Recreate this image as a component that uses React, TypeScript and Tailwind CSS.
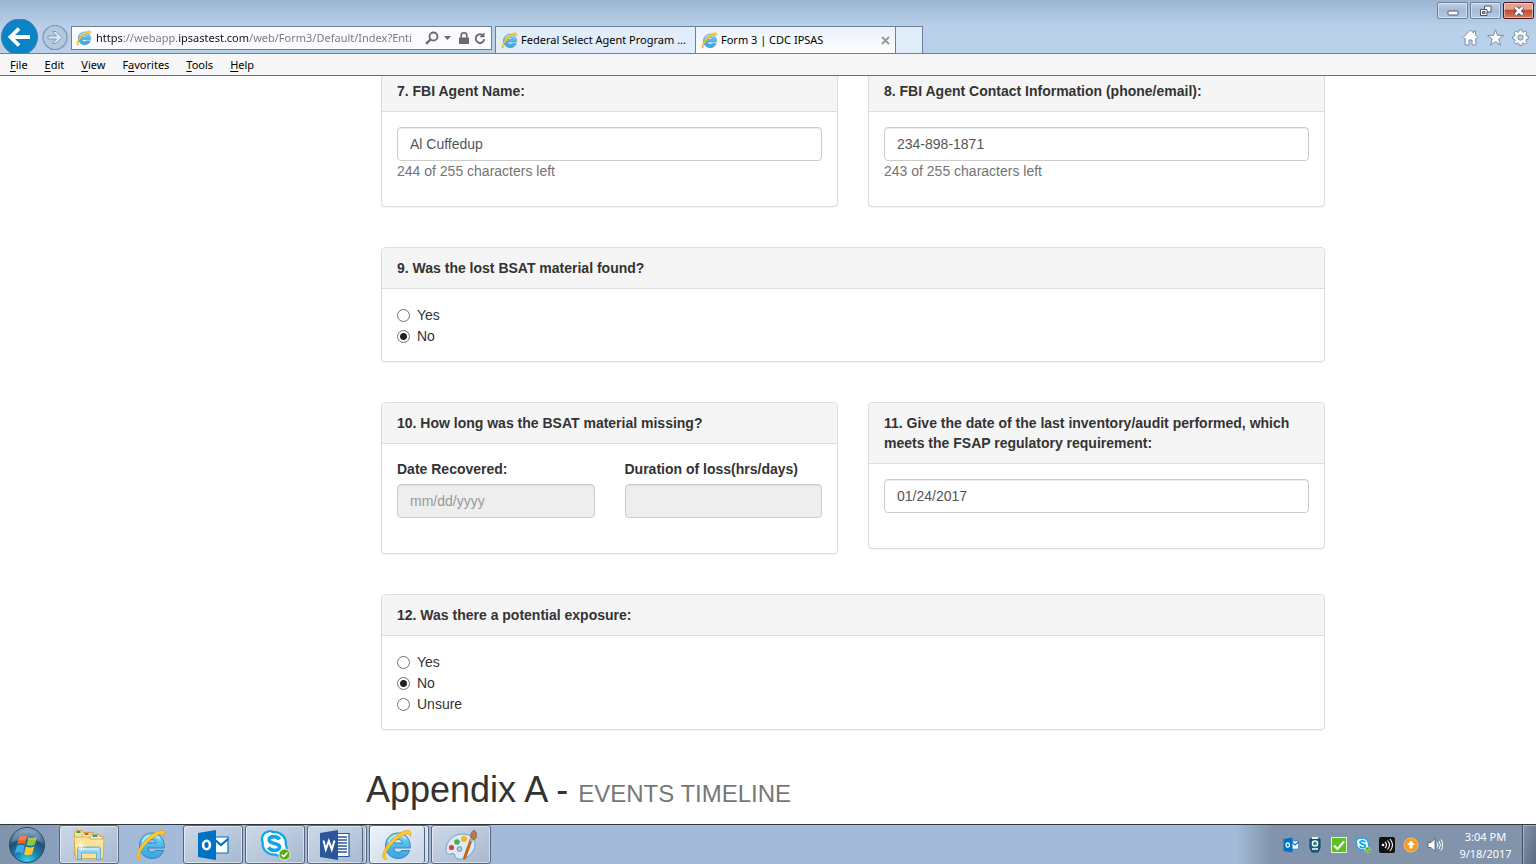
import React, { useState } from 'react';
import clsx from 'clsx';

interface PanelProps {
    title: string;
    children: React.ReactNode;
}

interface RadioGroupProps {
    name: string;
    legend: string;
    options: string[];
    initial: string;
}

interface TextFieldProps {
    id: string;
    label: string;
    initial?: string;
    placeholder?: string;
    disabled?: boolean;
}

// ── Icons ──

function IeLogo({ size }: { size: number }) {
    return (
        <svg width={size} height={size} viewBox="0 0 32 32" className="shrink-0">
            <defs>
                <linearGradient id="ie-blue" x1="0" y1="0" x2="0" y2="1">
                    <stop offset="0" stopColor="#8adcf8" />
                    <stop offset=".5" stopColor="#4fb8ea" />
                    <stop offset="1" stopColor="#3aa5e0" />
                </linearGradient>
            </defs>
            <path
                d="M17 4C9.800 4 4.500 9.500 4.500 16.700S9.800 29.500 17.200 29.500c5.600 0 9.800-3 11.400-8h-8c-.8 1.200-2 1.700-3.400 1.700-2.500 0-4.200-1.500-4.400-4.200h16.400C29.800 10 24.800 4 17 4zM12.900 14c.5-2.200 1.900-3.500 4.200-3.500s3.600 1.300 4 3.500z"
                fill="url(#ie-blue)"
                stroke="#2b7fbd"
                strokeWidth=".9"
            />
            <path d="M7.500 13.500c1.500-4.500 5-7 9.500-7 3.300 0 6 1.300 7.700 3.500" fill="none" stroke="#c8effc" strokeWidth="1.500" />
            <path
                d="M6 29.800C1.500 31.500 .5 27.500 3.300 21.500 6.800 14 14.500 6 21.500 2.800c5.500-2.500 9.500-1.800 8 4.700-.6-2.700-3.200-3.200-7-1.300C15.800 9.500 8.500 16.500 5.300 23c-1.800 3.700-1.800 6 .7 6.800z"
                fill="#fdcb2d"
                stroke="#e0a010"
                strokeWidth=".7"
            />
        </svg>
    );
}

function OutlookIcon({ size }: { size: number }) {
    return (
        <svg width={size} height={size} viewBox="0 0 32 32">
            <path d="M17 8h14v16H17z" fill="#fff" stroke="#0072c6" strokeWidth="1.200" />
            <path d="M17 10l7 6 7-6" fill="none" stroke="#0072c6" strokeWidth="2.200" />
            <path d="M1 4l18-3v30L1 28z" fill="#0072c6" />
            <ellipse cx="9.500" cy="16" rx="3.400" ry="4.300" fill="none" stroke="#fff" strokeWidth="2.600" />
        </svg>
    );
}

function SkypeIcon({ size }: { size: number }) {
    return (
        <svg width={size} height={size} viewBox="0 0 32 32">
            <path
                d="M9 2.500c2-.6 3.800-.2 5.300.7 7.400-.7 13.200 5 12.500 12.300 2.200 4.200.3 9.800-4.800 11-2 .5-4 .1-5.400-.9C9 26.500 3 20.700 3.700 13.300 1.500 9 4 3.700 9 2.500z"
                fill="#fff"
                stroke="#12a5e8"
                strokeWidth="2.200"
            />
            <path
                d="M20.500 10.500c-1.200-2-3-2.900-5.300-2.900-2.900 0-5 1.200-5 3.300 0 4.600 10.400 2.400 10.400 7 0 2.200-2.300 3.500-5.300 3.500-2.500 0-4.700-1-5.800-3"
                fill="none"
                stroke="#12a5e8"
                strokeWidth="3.600"
            />
            <circle cx="25.500" cy="25.500" r="5.500" fill="#5da810" stroke="#fff" strokeWidth=".8" />
            <path d="M22.700 25.600l2 2 3.700-4" fill="none" stroke="#fff" strokeWidth="1.500" />
        </svg>
    );
}

function ExplorerIcon() {
    return (
        <svg width="32" height="32" viewBox="0 0 32 32">
            <path d="M1.500 4V2.500l1-1h7l1.500 2h9.500V27h-19z" fill="#f7e2a0" stroke="#c59d3f" strokeWidth=".8" />
            <path d="M9 27V4.500l1-1h7l1.500 2H25V27z" fill="#fae9ae" stroke="#c59d3f" strokeWidth=".8" />
            <path d="M17 29V6.500l1-1h8l1 2h2.500V29z" fill="#fbeebb" stroke="#c59d3f" strokeWidth=".8" />
            <path d="M1 8h15l1.500 2H31l-1 19.500H2.500z" fill="#f8e39b" stroke="#cfa84a" strokeWidth=".8" />
            <path d="M3.500 3h4" stroke="#10a52f" strokeWidth="1.800" />
            <path d="M11.500 5h4" stroke="#d6431f" strokeWidth="1.800" />
            <path d="M19.500 7h5" stroke="#1f86d8" strokeWidth="1.800" />
            <path d="M4.500 30.500V20q0-2 2-2h19q2 0 2 2v10.500h-4V24h-15v6.500z" fill="#9bd2ee" stroke="#5c9fca" strokeWidth=".8" />
            <path d="M6 20h20" stroke="#d5f0fb" strokeWidth="1.500" />
            <path d="M8 12v10M3 17h10M5 14l6 6M11 14l-6 6" stroke="#fff" strokeWidth=".9" opacity=".85" />
        </svg>
    );
}

function WordIcon() {
    return (
        <svg width="32" height="32" viewBox="0 0 32 32">
            <path d="M17 4.500h13v23H17z" fill="#fff" stroke="#2b579a" strokeWidth="1.200" />
            <path d="M19 8h9M19 11h9M19 14h9M19 17h9M19 20h9M19 23h9" stroke="#2b579a" strokeWidth="1.300" />
            <path d="M1 4l18-3v30L1 28z" fill="#2b579a" />
            <path d="M4.500 11.500l2.300 9 3-8.500 3 8.500 2.700-9" fill="none" stroke="#fff" strokeWidth="2" />
        </svg>
    );
}

function PaintIcon() {
    return (
        <svg width="32" height="32" viewBox="0 0 32 32">
            <path
                d="M17 5C9 5 1 12 1 20c0 4 2 6 5 5 3-1 4 0 4 2 1 4 7 4 12 1 5-3 8-8 8-13 0-6-5-10-13-10z"
                fill="#dceaf7"
                stroke="#7d9dbf"
            />
            <circle cx="6.500" cy="18.500" r="2.600" fill="#e13b3b" />
            <circle cx="12" cy="13" r="2.800" fill="#46b04a" />
            <circle cx="19" cy="10" r="3" fill="#f2b51d" />
            <circle cx="14.500" cy="20" r="2.400" fill="#b4cce2" stroke="#6c93b8" />
            <path d="M26 11L19.500 29" stroke="#c8651b" strokeWidth="3" strokeLinecap="round" />
            <path d="M25 12l2-4 3 1-2 4z" fill="#b9c0c8" />
            <path d="M26 9c-1-3 0-6 3-8 2 2 4 4 2 8l-2 2z" fill="#b57a48" stroke="#8a562c" strokeWidth=".6" />
        </svg>
    );
}

function StartOrb() {
    return (
        <svg width="38" height="38" viewBox="0 0 38 38">
            <defs>
                <radialGradient id="orb" cx=".5" cy=".95" r=".95">
                    <stop offset="0" stopColor="#35d6f2" />
                    <stop offset=".35" stopColor="#1b7fb0" />
                    <stop offset=".65" stopColor="#235078" />
                    <stop offset="1" stopColor="#8fb2cc" />
                </radialGradient>
            </defs>
            <circle cx="19" cy="19" r="17.500" fill="url(#orb)" stroke="#234767" />
            <path d="M11.500 10.500q4-2 7.500 0l-2 7.700q-4-2-8 .3z" fill="#f0632a" />
            <path d="M20.500 11.300q4 2 8.500-.5l-2.200 8q-4 2-8.300 0z" fill="#8cc63f" />
            <path d="M8.700 20q4-2.200 8-.4l-2 7.500q-4-2-8 .4z" fill="#41a8e8" />
            <path d="M18 20.600q4 2 8.300 0l-2.300 7.500q-4 2.200-8 .2z" fill="#fdc82f" />
            <path d="M4 16a15.500 15.500 0 0 1 30 0q-15-5-30 0z" fill="#fff" opacity=".18" />
        </svg>
    );
}

// ── Browser chrome ──

const MENU = [
    ['', 'F', 'ile'],
    ['', 'E', 'dit'],
    ['', 'V', 'iew'],
    ['F', 'a', 'vorites'],
    ['', 'T', 'ools'],
    ['', 'H', 'elp'],
];

function WindowButtons() {
    const base = 'flex h-[17px] w-[31px] items-center justify-center rounded-[2px] border shadow-[inset_0_0_0_1px_rgba(255,255,255,0.45)]';
    return (
        <div className="flex h-[26px] items-start justify-end gap-[2px] pr-[2px] pt-[2px]">
            <button aria-label="Minimize" className={clsx(base, 'border-[#6d7f99] bg-linear-to-b from-[#bfd0e4] via-[#a5bbd6] to-[#b6cbe4]')}>
                <svg width="12" height="12" viewBox="0 0 12 12">
                    <rect x="1" y="6" width="10" height="4" rx=".5" fill="#fff" stroke="#4f5766" />
                </svg>
            </button>
            <button aria-label="Restore" className={clsx(base, 'border-[#6d7f99] bg-linear-to-b from-[#bfd0e4] via-[#a5bbd6] to-[#b6cbe4]')}>
                <svg width="13" height="12" viewBox="0 0 13 12">
                    <path d="M5.500 1h6.500v6H5.500z" fill="#fff" stroke="#4f5766" />
                    <path d="M1.500 4.500h6.500v6H1.500z" fill="#fff" stroke="#4f5766" />
                    <path d="M3.500 6.500h2.500v2H3.500z" fill="#9db2cf" stroke="#4f5766" />
                </svg>
            </button>
            <button aria-label="Close" className={clsx(base, 'border-[#4f1620] bg-linear-to-b from-[#e5a293] from-40% via-[#c04a33] via-50% to-[#d08064]')}>
                <svg width="12" height="12" viewBox="0 0 12 12">
                    <path d="M2.500 2.500l7 7M9.500 2.500l-7 7" stroke="#4b4a58" strokeWidth="4.500" />
                    <path d="M2.500 2.500l7 7M9.500 2.500l-7 7" stroke="#fff" strokeWidth="2.500" />
                </svg>
            </button>
        </div>
    );
}

function AddressBar() {
    return (
        <div className="flex h-[24px] w-[421px] items-center border border-[#6f8199] bg-[#f9fbfe] pl-[4px] pr-[5px]">
            <IeLogo size={16} />
            {/* scheme and domain are dark, the rest of the URL is grey */}
            <input
                aria-label="Address"
                defaultValue="https://webapp.ipsastest.com/web/Form3/Default/Index?Enti"
                className="ml-[4px] min-w-0 flex-1 bg-[linear-gradient(90deg,#111_0_27px,#777_27px_82px,#111_82px_153px,#777_153px)] bg-clip-text text-transparent outline-none"
            />
            <button aria-label="Search" className="ml-[4px]">
                <svg width="14" height="14" viewBox="0 0 14 14" fill="none" stroke="#6b6b6b">
                    <circle cx="8.500" cy="5.500" r="4" strokeWidth="1.800" />
                    <path d="M5.500 8.500L1 12.800" strokeWidth="2.400" />
                </svg>
            </button>
            <button aria-label="Show address list" className="ml-[5px]">
                <svg width="7" height="4" viewBox="0 0 7 4">
                    <path d="M0 0h7L3.500 4z" fill="#6b6b6b" />
                </svg>
            </button>
            <svg width="10" height="13" viewBox="0 0 10 13" className="ml-[8px]">
                <path d="M0 5.500h10V12H0z" fill="#6b6b6b" />
                <path d="M2.200 6V3.500a2.800 2.800 0 0 1 5.600 0V6" fill="none" stroke="#6b6b6b" strokeWidth="1.600" />
            </svg>
            <button aria-label="Refresh" className="ml-[5px]">
                <svg width="12" height="13" viewBox="0 0 12 13">
                    <path d="M8.500 3.100A4.300 4.300 0 1 0 10.300 7" fill="none" stroke="#6b6b6b" strokeWidth="1.900" />
                    <path d="M5.500 5.300h5V.3z" fill="#6b6b6b" />
                </svg>
            </button>
        </div>
    );
}

function BrowserChrome() {
    return (
        <header className="shrink-0 font-['Noto_Sans',sans-serif] text-[11px] text-black">
            <div className="flex h-[54px] flex-col border-b border-[#6f8199] bg-linear-to-b from-[#9cb6d2] to-[#b9d0ea] to-50%">
                <WindowButtons />
                <div className="flex h-[27px]">
                    <div className="flex w-[71px] shrink-0 items-end overflow-visible">
                        <button aria-label="Back" className="h-[34px] w-[40px]">
                            <svg width="40" height="34" viewBox="0 0 40 34">
                                <circle cx="19.500" cy="18" r="18" fill="#0a84c4" stroke="#4e7799" />
                                <path d="M10 18h20M19 9.500L10.500 18l8.500 8.500" fill="none" stroke="#fff" strokeWidth="3.800" />
                            </svg>
                        </button>
                        <button aria-label="Forward" className="h-[28px] w-[30px]">
                            <svg width="30" height="28" viewBox="0 0 30 28">
                                <circle cx="15" cy="12.500" r="12" fill="#b3c9e2" stroke="#7f93ad" strokeWidth="1.200" />
                                <path d="M8 11h8.500l-4-4.500h3.500l6 6-6 6h-3.500l4-4.500H8z" fill="#dbe7f5" stroke="#7f93ad" strokeWidth=".9" />
                            </svg>
                        </button>
                    </div>
                    <AddressBar />
                    <nav className="ml-[3px] flex" aria-label="Tabs">
                        <button className="flex w-[201px] items-center gap-[3px] border border-b-0 border-[#6f8199] bg-[#e1edf9] pl-[5px] whitespace-nowrap">
                            <IeLogo size={17} />
                            Federal Select Agent Program ...
                        </button>
                        <button className="-ml-px flex w-[201px] items-center gap-[3px] border border-b-0 border-[#6f8199] bg-linear-to-b from-[#e9f1fa] to-white pl-[5px] pr-[5px]">
                            <IeLogo size={17} />
                            Form 3 | CDC IPSAS
                            <svg width="9" height="9" viewBox="0 0 9 9" className="ml-auto">
                                <path d="M1 1l7 7M8 1L1 8" stroke="#9a9a9a" strokeWidth="2" />
                            </svg>
                        </button>
                        <button aria-label="New tab" className="-ml-px w-[28px] border border-b-0 border-[#6f8199] bg-[#e1edf9]" />
                    </nav>
                    <div className="ml-auto flex items-start gap-[8px] pr-[7px] pt-[3px]">
                        <button aria-label="Home">
                            <svg width="17" height="17" viewBox="0 0 17 17" fill="#fff" stroke="#6f86a3" strokeWidth=".9">
                                <path d="M8.500 1L1 8.500l1 1h1.200V16h3.800v-5h3v5h3.800V9.500H15l1-1-2.500-2.500V2h-2v2z" />
                            </svg>
                        </button>
                        <button aria-label="Favorites">
                            <svg width="17" height="17" viewBox="0 0 17 17" fill="#fff" stroke="#6f86a3" strokeWidth=".9">
                                <path d="M8.500.8l2 5.600h6l-4.800 3.700 1.800 6-5-3.600-5 3.600 1.800-6L.6 6.400h6z" />
                            </svg>
                        </button>
                        <button aria-label="Tools">
                            <svg width="17" height="17" viewBox="0 0 17 17" fill="#fff" stroke="#6f86a3" strokeWidth=".9">
                                <path
                                    fillRule="evenodd"
                                    d="M7.200.8h2.600l.4 2 1.300.5 1.700-1.200 1.800 1.800-1.200 1.700.5 1.300 2 .4v2.600l-2 .4-.5 1.300 1.200 1.700-1.800 1.800-1.700-1.200-1.300.5-.4 2H7.200l-.4-2-1.300-.5-1.700 1.200L2 13.300l1.200-1.700-.5-1.300-2-.4V7.300l2-.4.5-1.300L2 3.900l1.800-1.800 1.700 1.200 1.300-.5zM8.500 5.800a2.700 2.700 0 1 0 0 5.400 2.700 2.700 0 0 0 0-5.400z"
                                />
                            </svg>
                        </button>
                    </div>
                </div>
            </div>
            <nav aria-label="Menu" className="flex h-[22px] items-end gap-[17px] border-b border-[#6b6b6b] bg-[#f7f7f7] pb-[2px] pl-[10px]">
                {MENU.map(([before, key, after]) => (
                    <button key={key}>
                        {before}
                        <span className="underline underline-offset-2">{key}</span>
                        {after}
                    </button>
                ))}
            </nav>
        </header>
    );
}

// ── Form ──

function Panel({ title, children }: PanelProps) {
    return (
        <section className="rounded-[4px] border border-[#ddd] bg-white shadow-[0_1px_1px_rgba(0,0,0,0.05)]">
            <h2 className="rounded-t-[3px] border-b border-[#ddd] bg-[#f5f5f5] px-[15px] py-[10px] font-bold">{title}</h2>
            <div className="p-[15px]">{children}</div>
        </section>
    );
}

function TextField({ id, label, initial = '', placeholder, disabled }: TextFieldProps) {
    const [value, setValue] = useState(initial);
    return (
        <input
            id={id}
            aria-label={label}
            type="text"
            value={value}
            placeholder={placeholder}
            disabled={disabled}
            onChange={(e) => setValue(e.target.value)}
            className="block h-[34px] w-full rounded-[4px] border border-[#ccc] bg-white px-[12px] text-[#555] shadow-[inset_0_1px_1px_rgba(0,0,0,0.075)] placeholder:text-[#999] disabled:bg-[#eee]"
        />
    );
}

function RadioGroup({ name, legend, options, initial }: RadioGroupProps) {
    const [selected, setSelected] = useState(initial);
    return (
        <div role="radiogroup" aria-label={legend}>
            {options.map((option) => (
                <label key={option} className="flex h-[21px] items-center gap-[7px]">
                    <input
                        type="radio"
                        name={name}
                        checked={selected === option}
                        onChange={() => setSelected(option)}
                        className="mt-[2px] size-[13px] appearance-none rounded-full border border-[#707070] bg-white checked:bg-[radial-gradient(circle,#222_3px,#fff_4px)]"
                    />
                    {option}
                </label>
            ))}
        </div>
    );
}

function IncidentForm() {
    return (
        <main className="min-h-0 flex-1 overflow-hidden bg-white pl-[366px] pr-[196px] font-['Liberation_Sans',Arial,sans-serif] text-[14px] leading-[20px] text-[#333]">
            <form className="-mt-[6px] flex flex-col gap-[40px] px-[15px]">
                <div className="grid grid-cols-2 items-start gap-[30px]">
                    <Panel title="7. FBI Agent Name:">
                        <TextField id="agent-name" label="FBI Agent Name" initial="Al Cuffedup" />
                        <p className="mb-[10px] text-[#737373]">244 of 255 characters left</p>
                    </Panel>
                    <Panel title="8. FBI Agent Contact Information (phone/email):">
                        <TextField id="agent-contact" label="FBI Agent Contact Information" initial="234-898-1871" />
                        <p className="mb-[10px] text-[#737373]">243 of 255 characters left</p>
                    </Panel>
                </div>
                <Panel title="9. Was the lost BSAT material found?">
                    <RadioGroup name="found" legend="Was the lost BSAT material found?" options={['Yes', 'No']} initial="No" />
                </Panel>
                <div className="grid grid-cols-2 items-start gap-[30px]">
                    <Panel title="10. How long was the BSAT material missing?">
                        <div className="mb-[20px] grid grid-cols-2 gap-[30px]">
                            <div>
                                <label htmlFor="recovered" className="mb-[5px] block font-bold">Date Recovered:</label>
                                <TextField id="recovered" label="Date Recovered" placeholder="mm/dd/yyyy" disabled />
                            </div>
                            <div>
                                <label htmlFor="duration" className="mb-[5px] block font-bold">Duration of loss(hrs/days)</label>
                                <TextField id="duration" label="Duration of loss" disabled />
                            </div>
                        </div>
                    </Panel>
                    <Panel title="11. Give the date of the last inventory/audit performed, which meets the FSAP regulatory requirement:">
                        <div className="mb-[20px]">
                            <TextField id="audit-date" label="Date of last inventory" initial="01/24/2017" />
                        </div>
                    </Panel>
                </div>
                <Panel title="12. Was there a potential exposure:">
                    <RadioGroup name="exposure" legend="Was there a potential exposure" options={['Yes', 'No', 'Unsure']} initial="No" />
                </Panel>
            </form>
            <h1 className="mt-[40px] text-[36px] leading-[40px]">
                Appendix A - <small className="text-[24px] leading-none text-[#777]">EVENTS TIMELINE</small>
            </h1>
        </main>
    );
}

// ── Taskbar ──

const APPS = [
    { name: 'Windows Explorer', icon: <ExplorerIcon />, framed: true },
    { name: 'Internet Explorer', icon: <IeLogo size={32} />, framed: false },
    { name: 'Outlook', icon: <OutlookIcon size={32} />, framed: true },
    { name: 'Skype for Business', icon: <SkypeIcon size={32} />, framed: true },
    { name: 'Word', icon: <WordIcon />, framed: true, stacked: true },
    { name: 'Form 3', icon: <IeLogo size={32} />, framed: true, stacked: true, active: true },
    { name: 'Paint', icon: <PaintIcon />, framed: true },
];

function Tray() {
    return (
        <div className="flex items-center gap-[8px]">
            <OutlookIcon size={16} />
            <svg width="16" height="16" viewBox="0 0 16 16">
                <path d="M3 2h10v9l-2 4H5l-2-4z" fill="#1b5e86" stroke="#153e5c" />
                <path d="M5 0h6v2H5z" fill="#e8f0f4" />
                <circle cx="8" cy="6.500" r="2.600" fill="#2a9470" stroke="#fff" strokeWidth="1.400" />
                <path d="M5 12h6" stroke="#fff" strokeWidth="1.500" />
            </svg>
            <svg width="16" height="16" viewBox="0 0 16 16">
                <path d="M.5.5h15v15H.5z" fill="#5ac41f" stroke="#e5f7d8" />
                <path d="M3 8.500l3.500 3.500L13 4.500" fill="none" stroke="#fff" strokeWidth="2.200" />
            </svg>
            <SkypeIcon size={16} />
            <svg width="16" height="16" viewBox="0 0 16 16">
                <rect width="16" height="16" rx="2" fill="#111" />
                <circle cx="4" cy="8" r="1.300" fill="#fff" />
                <path d="M6 5q3 3 0 6M8.500 3.500q4 4.500 0 9M11 2q5 6 0 12" fill="none" stroke="#fff" strokeWidth="1.100" />
            </svg>
            <svg width="16" height="16" viewBox="0 0 16 16">
                <circle cx="8" cy="8" r="7" fill="#f79a1e" stroke="#f9bd68" />
                <path d="M8 3.500L4 8h2.500v3.500h3V8H12z" fill="#fff" />
            </svg>
            <svg width="16" height="16" viewBox="0 0 16 16">
                <path d="M1 5.500h3L8 1.500v13L4 10.500H1z" fill="#fff" stroke="#4b5868" strokeWidth=".8" />
                <path d="M10 5.500q2 2.500 0 5M12 4q3 4 0 8M14 2.500q3.500 5.500 0 11" fill="none" stroke="#fff" strokeWidth="1" />
            </svg>
        </div>
    );
}

function Taskbar() {
    return (
        <footer className="flex h-[40px] shrink-0 border-t border-[#30363e] bg-[linear-gradient(90deg,#8093ad_0,#8ba0bc_56px,#a3bbd8_120px,#a3bbd8_calc(100%_-_300px),#8294ab_calc(100%_-_265px),#8294ab_100%)] font-['Noto_Sans',sans-serif] text-[11px]">
            <button aria-label="Start" className="flex w-[59px] items-center pl-[8px]">
                <StartOrb />
            </button>
            <div className="flex gap-[2px]">
                {APPS.map((app) => (
                    <button
                        key={app.name}
                        aria-label={app.name}
                        className={clsx(
                            'flex w-[60px] items-center justify-center rounded-[3px]',
                            app.framed && 'border border-[#56667d] shadow-[inset_0_0_0_1px_rgba(255,255,255,0.5)]',
                            app.framed && (app.active ? 'bg-linear-to-br from-[#eef3f9] to-[#c6d4e6]' : 'bg-linear-to-br from-[#cdd9e9] to-[#a6b8d0]'),
                        )}
                    >
                        {app.stacked ? (
                            <span className="mr-auto flex h-full w-[55px] items-center justify-center rounded-r-[3px] border-r border-[#56667d]">{app.icon}</span>
                        ) : (
                            app.icon
                        )}
                    </button>
                ))}
            </div>
            <div className="ml-auto flex">
                <Tray />
                <div className="flex w-[79px] flex-col items-center justify-center pl-[6px] text-center leading-[17px] text-white">
                    <span>3:04 PM</span>
                    <span>9/18/2017</span>
                </div>
                <button aria-label="Show desktop" className="w-[14px] border-l border-[#414d5e] bg-linear-to-br from-[#8393aa] to-[#5c6b80] shadow-[inset_1px_1px_0_rgba(255,255,255,0.35)]" />
            </div>
        </footer>
    );
}

export default function App() {
    return (
        <div className="flex h-screen flex-col overflow-hidden">
            <BrowserChrome />
            <IncidentForm />
            <Taskbar />
        </div>
    );
}
